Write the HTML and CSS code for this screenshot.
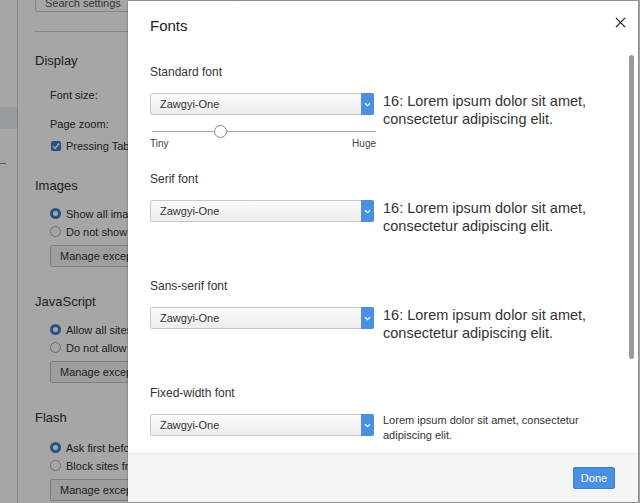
FILE: index.html
```html
<!DOCTYPE html>
<html>
<head>
<meta charset="utf-8">
<link rel="stylesheet" href="styles.css">
</head>
<body>
<div class="page">
  <div class="sidebar">
    <div class="side-sel"></div>
    <div class="side-rule"></div>
  </div>
  <div class="main">
    <div class="search">Search settings</div>
    <div class="sep"></div>
    <h2 class="sec first">Display</h2>
    <div class="row r-font">Font size:</div>
    <div class="row r-zoom">Page zoom:</div>
    <div class="row r-check"><span class="cb"><svg viewBox="0 0 10 10" width="10" height="10"><path d="M2 5.2 L4.2 7.4 L8.2 2.6" fill="none" stroke="#fff" stroke-width="1.6"/></svg></span>Pressing Tab on a webpage highlights links</div>
    <h2 class="sec s-img">Images</h2>
    <div class="row radio-row"><span class="rd on"></span>Show all images</div>
    <div class="row radio-row"><span class="rd"></span>Do not show any images</div>
    <div class="btn">Manage exceptions...</div>
    <h2 class="sec">JavaScript</h2>
    <div class="row radio-row"><span class="rd on"></span>Allow all sites to run JavaScript</div>
    <div class="row radio-row"><span class="rd"></span>Do not allow any site to run JavaScript</div>
    <div class="btn">Manage exceptions...</div>
    <h2 class="sec">Flash</h2>
    <div class="row radio-row r-flash"><span class="rd on"></span>Ask first before allowing sites to run Flash</div>
    <div class="row radio-row"><span class="rd"></span>Block sites from running Flash</div>
    <div class="btn">Manage exceptions...</div>
  </div>
</div>
<div class="overlay"></div>
<div class="dialog">
  <div class="dlg-head">
    <div class="dlg-title">Fonts</div>
    <svg class="close" viewBox="0 0 12 12" width="11" height="11"><path d="M1 1 L11 11 M11 1 L1 11" stroke="#222" stroke-width="1.4"/></svg>
  </div>
  <div class="dlg-body">
    <div class="fsec">
      <div class="flabel">Standard font</div>
      <div class="frow">
        <div class="left">
          <div class="select"><span class="sel-text">Zawgyi-One</span><span class="sel-arrow"><svg viewBox="0 0 8 6" width="7" height="5"><path d="M1 1.5 L4 4.5 L7 1.5" fill="none" stroke="#fff" stroke-width="1.3"/></svg></span></div>
          <div class="slider"><div class="track"></div><div class="thumb"></div></div>
          <div class="slabels"><span>Tiny</span><span>Huge</span></div>
        </div>
        <div class="sample">16: Lorem ipsum dolor sit amet, consectetur adipiscing elit.</div>
      </div>
    </div>
    <div class="fsec">
      <div class="flabel">Serif font</div>
      <div class="frow">
        <div class="select"><span class="sel-text">Zawgyi-One</span><span class="sel-arrow"><svg viewBox="0 0 8 6" width="7" height="5"><path d="M1 1.5 L4 4.5 L7 1.5" fill="none" stroke="#fff" stroke-width="1.3"/></svg></span></div>
        <div class="sample">16: Lorem ipsum dolor sit amet, consectetur adipiscing elit.</div>
      </div>
    </div>
    <div class="fsec">
      <div class="flabel">Sans-serif font</div>
      <div class="frow">
        <div class="select"><span class="sel-text">Zawgyi-One</span><span class="sel-arrow"><svg viewBox="0 0 8 6" width="7" height="5"><path d="M1 1.5 L4 4.5 L7 1.5" fill="none" stroke="#fff" stroke-width="1.3"/></svg></span></div>
        <div class="sample">16: Lorem ipsum dolor sit amet, consectetur adipiscing elit.</div>
      </div>
    </div>
    <div class="fsec">
      <div class="flabel">Fixed-width font</div>
      <div class="frow">
        <div class="select"><span class="sel-text">Zawgyi-One</span><span class="sel-arrow"><svg viewBox="0 0 8 6" width="7" height="5"><path d="M1 1.5 L4 4.5 L7 1.5" fill="none" stroke="#fff" stroke-width="1.3"/></svg></span></div>
        <div class="sample small">Lorem ipsum dolor sit amet, consectetur adipiscing elit.</div>
      </div>
    </div>
    <div class="scroll-thumb"></div>
  </div>
  <div class="dlg-foot">
    <div class="done">Done</div>
  </div>
</div>
</body>
</html>
```

FILE: styles.css
```css
* { box-sizing: border-box; }
html, body {
  margin: 0;
  padding: 0;
  width: 640px;
  height: 503px;
  overflow: hidden;
  font-family: "Liberation Sans", Arial, sans-serif;
  color: #303030;
  background: #fff;
}
.page {
  display: flex;
  height: 503px;
}
.sidebar {
  width: 18px;
  border-right: 1px solid #c8c8c8;
  padding-top: 107px;
  flex: none;
}
.side-sel {
  height: 22px;
  background: #e6f0f5;
}
.side-rule {
  margin-top: 34px;
  width: 6px;
  border-top: 1px solid #888;
}
.main {
  padding-left: 17px;
  flex: 1;
  white-space: nowrap;
  overflow: hidden;
}
.search {
  margin-top: -10px;
  height: 22px;
  width: 200px;
  border: 1px solid #ccc;
  border-radius: 2px;
  font-size: 11px;
  line-height: 20px;
  padding: 2px 0 0 9px;
  color: #555;
}
.sep {
  margin-top: 19px;
  border-top: 1px solid #ccc;
  width: 300px;
}
.sec {
  margin: 0;
  font-weight: normal;
  font-size: 13px;
  line-height: 16px;
  margin-top: 27px;
}
.sec.first { margin-top: 21px; }
.sec.s-img { margin-top: 25px; }
.row {
  font-size: 11px;
  line-height: 14px;
  padding-left: 15px;
  display: flex;
  align-items: center;
}
.r-font { margin-top: 19px; }
.r-zoom { margin-top: 15px; }
.r-check { margin-top: 8px; }
.cb {
  width: 10px;
  height: 10px;
  background: #3b7fd0;
  border-radius: 2px;
  margin-left: 1px;
  margin-right: 5px;
  display: inline-flex;
}
.radio-row { height: 17px; margin-top: 1px; }
.sec + .radio-row { margin-top: 11px; }
.sec + .r-flash { margin-top: 13px; }
.rd {
  width: 11px;
  height: 11px;
  border-radius: 50%;
  border: 1px solid #aaa;
  margin-right: 5px;
  background: #fff;
}
.rd.on {
  border: 3px solid #3b7fd0;
  background: #fff;
}
.btn {
  margin-top: 5px;
  margin-left: 15px;
  width: 120px;
  height: 22px;
  border: 1px solid #c4c4c4;
  border-radius: 2px;
  background: #f3f3f3;
  font-size: 11px;
  line-height: 20px;
  padding-left: 9px;
}
.overlay {
  position: absolute;
  left: 0; top: 0;
  width: 640px; height: 503px;
  background: rgba(0,0,0,0.35);
}
.dialog {
  position: absolute;
  left: 128px;
  top: 1px;
  width: 510px;
  height: 501px;
  background: #fff;
  display: flex;
  flex-direction: column;
  box-shadow: 0 0 2px rgba(0,0,0,0.4);
}
.dlg-head {
  height: 52px;
  flex: none;
  display: flex;
  justify-content: space-between;
  align-items: flex-start;
  padding: 16px 12px 0 22px;
}
.dlg-title {
  font-size: 15px;
  line-height: 18px;
  color: #222;
}
.dlg-body {
  flex: 1;
  overflow: hidden;
  position: relative;
  padding: 11px 0 0 22px;
}
.fsec {
  height: 107px;
}
.flabel {
  font-size: 12px;
  line-height: 16px;
  color: #333;
}
.frow {
  display: flex;
  align-items: flex-start;
  margin-top: 13px;
}
.left { width: 226px; flex: none; }
.select {
  width: 224px;
  height: 22px;
  border: 1px solid #c8c8c8;
  border-radius: 2px;
  background: linear-gradient(#fbfbfb, #ededed);
  display: flex;
  align-items: center;
  justify-content: space-between;
  flex: none;
}
.sel-text {
  font-size: 11px;
  padding-left: 9px;
  color: #333;
}
.sel-arrow {
  width: 13px;
  height: 22px;
  margin-right: -1px;
  background: #4a90e2;
  border-radius: 0 2px 2px 0;
  display: flex;
  align-items: center;
  justify-content: center;
}
.frow > .select { margin-right: 2px; }
.slider {
  position: relative;
  height: 16px;
  margin-top: 8px;
}
.track {
  position: absolute;
  left: 2px; right: 0;
  top: 8px;
  border-top: 1px solid #a8a8a8;
}
.thumb {
  position: absolute;
  left: 64px;
  top: 2px;
  width: 13px;
  height: 13px;
  border-radius: 50%;
  border: 1px solid #8a8a8a;
  background: #fff;
}
.slabels {
  display: flex;
  justify-content: space-between;
  font-size: 10px;
  line-height: 12px;
  color: #444;
  margin-top: -1px;
}
.sample {
  margin-left: 7px;
  margin-top: -1px;
  font-size: 14.5px;
  line-height: 18px;
  color: #333;
  width: 220px;
}
.sample.small {
  font-size: 11px;
  line-height: 15px;
  width: 215px;
}
.scroll-thumb {
  position: absolute;
  right: 4px;
  top: 2px;
  width: 5px;
  height: 304px;
  border-radius: 3px;
  background: #9a9a9a;
}
.dlg-foot {
  height: 49px;
  flex: none;
  border-top: 1px solid #e8e8e8;
  background: #f5f5f5;
  display: flex;
  justify-content: flex-end;
  padding: 13px 23px 0 0;
}
.done {
  width: 42px;
  height: 22px;
  background: #4a90e2;
  border: 1px solid #3c7fd0;
  border-radius: 2px;
  color: #fff;
  font-size: 11px;
  line-height: 20px;
  text-align: center;
}
```
